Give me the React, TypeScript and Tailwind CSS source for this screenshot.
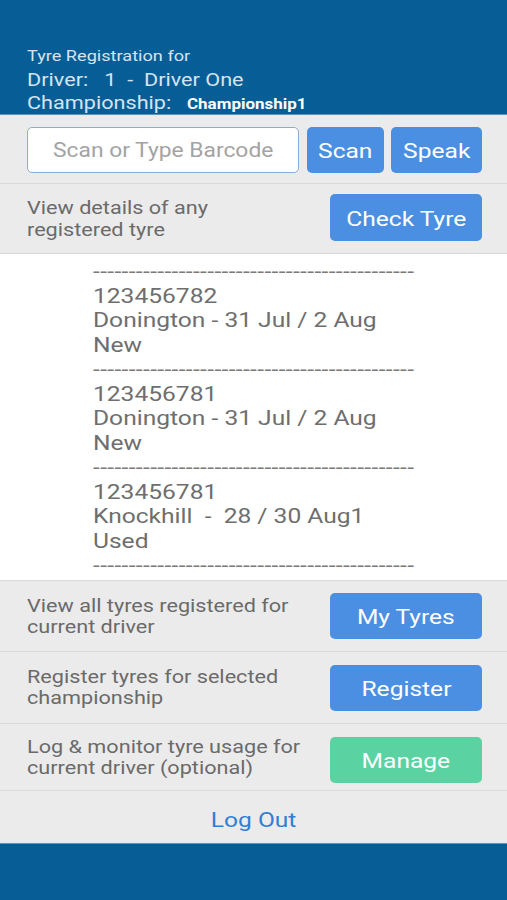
import React from "react";

const font = { fontFamily: "Roboto, 'Noto Sans', sans-serif" };

function L({ children, className = "" }: { children: React.ReactNode; className?: string }) {
  return <span className={"inline-block origin-left scale-x-[1.17] whitespace-pre " + className}>{children}</span>;
}
function C({ children, className = "" }: { children: React.ReactNode; className?: string }) {
  return <span className={"inline-block origin-center scale-x-[1.17] whitespace-pre " + className}>{children}</span>;
}

function Btn({ label, w, green }: { label: string; w: string; green?: boolean }) {
  return (
    <div
      className={
        "h-[46px] rounded-[5px] flex items-center justify-center pt-[3px] text-white text-[21px] leading-none shrink-0 " +
        w +
        (green ? " bg-[#5ad2a1]" : " bg-[#4a8fe1]")
      }
    >
      <C>{label}</C>
    </div>
  );
}

const DASH = "-".repeat(45);

function Dashes() {
  return (
    <div className="text-[#7a7a7a] tracking-[0.3px]">
      <L>{DASH}</L>
    </div>
  );
}

function Entry({ code, where, state }: { code: string; where: string; state: string }) {
  return (
    <>
      <div>
        <L>{code}</L>
      </div>
      <div>
        <L>{where}</L>
      </div>
      <div>
        <L>{state}</L>
      </div>
      <Dashes />
    </>
  );
}

function TwoLines({ a, b, pt }: { a: string; b: string; pt: string }) {
  return (
    <div className={"flex flex-col text-[18.5px] leading-[21.5px] text-[#6a6a6a] " + pt}>
      <div>
        <L>{a}</L>
      </div>
      <div>
        <L>{b}</L>
      </div>
    </div>
  );
}

export default function App() {
  return (
    <div className="w-[507px] h-[900px] flex flex-col bg-[#ebebeb] overflow-hidden" style={font}>
      <div className="h-[115px] shrink-0 bg-[#075e96] pt-[44px] pl-[27px] text-[#d5e4f0] border-b border-[#5d93bd]">
        <div className="text-[15.5px] leading-[24px]">
          <L>Tyre Registration for</L>
        </div>
        <div className="text-[18.5px] leading-[24px]">
          <L>{"Driver:   1  -  Driver One"}</L>
        </div>
        <div className="flex items-baseline leading-[23px]">
          <div className="w-[160px] text-[18.5px]">
            <L>Championship:</L>
          </div>
          <div className="text-[14.5px] font-bold text-white">
            <L>Championship1</L>
          </div>
        </div>
      </div>

      <div className="h-[69px] shrink-0 flex items-start pt-[12px] pl-[27px] pr-[25px] border-b border-[#d9d9d9]">
        <div className="w-[272px] h-[46px] shrink-0 rounded-[5px] bg-white border border-[#8cabd6] flex items-center justify-center pt-[2px] text-[19.5px] text-[#a3a3a3] leading-none">
          <C>Scan or Type Barcode</C>
        </div>
        <div className="ml-[8px]">
          <Btn label="Scan" w="w-[77px]" />
        </div>
        <div className="ml-[7px]">
          <Btn label="Speak" w="w-[91px]" />
        </div>
      </div>

      <div className="h-[70px] shrink-0 flex items-start pt-[10px] justify-between pl-[27px] pr-[25px] border-b border-[#d9d9d9]">
        <TwoLines a="View details of any" b="registered tyre" pt="pt-[4px]" />
        <Btn label="Check Tyre" w="w-[152px] !h-[47px]" />
      </div>

      <div className="shrink-0 bg-white pt-[5px] pb-[2px] pl-[93px] text-[21px] leading-[24.5px] text-[#6e6e6e] border-b border-[#d9d9d9]">
        <Dashes />
        <Entry code="123456782" where="Donington - 31 Jul / 2 Aug" state="New" />
        <Entry code="123456781" where="Donington - 31 Jul / 2 Aug" state="New" />
        <Entry code="123456781" where={"Knockhill  -  28 / 30 Aug1"} state="Used" />
      </div>

      <div className="h-[71px] shrink-0 flex items-start pt-[12px] justify-between pl-[27px] pr-[25px] border-b border-[#d9d9d9]">
        <TwoLines a="View all tyres registered for" b="current driver" pt="pt-[3px]" />
        <Btn label="My Tyres" w="w-[152px]" />
      </div>
      <div className="h-[72px] shrink-0 flex items-start pt-[13px] justify-between pl-[27px] pr-[25px] border-b border-[#d9d9d9]">
        <TwoLines a="Register tyres for selected" b="championship" pt="pt-[2px]" />
        <Btn label="Register" w="w-[152px]" />
      </div>
      <div className="h-[67px] shrink-0 flex items-start pt-[13px] justify-between pl-[27px] pr-[25px] border-b border-[#d9d9d9]">
        <TwoLines a="Log & monitor tyre usage for" b="current driver (optional)" pt="pt-[0px]" />
        <Btn label="Manage" w="w-[152px]" green />
      </div>

      <div className="h-[53px] shrink-0 flex items-center justify-center pt-[7px] text-[21px] leading-none text-[#2f7fd4] border-b border-[#5d93bd]">
        <C>Log Out</C>
      </div>
      <div className="flex-1 bg-[#075e96]" />
    </div>
  );
}
